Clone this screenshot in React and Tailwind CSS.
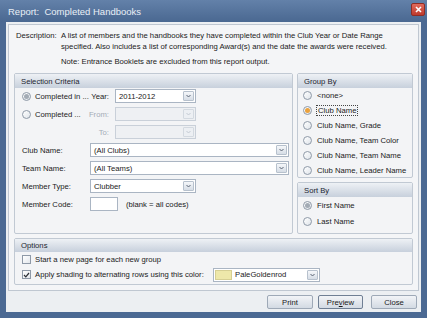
import React from 'react';

const FONT = { fontFamily: '"Liberation Sans", Arial, sans-serif' };

const Arrow = ({ disabled }) => (
  <span
    className={`flex items-center justify-center w-[11px] m-[1px] border rounded-[1px] ${
      disabled
        ? 'border-[#d3d9e0] bg-[#eceff3]'
        : 'border-[#b7c1cd] bg-gradient-to-b from-[#f5f7fa] to-[#d6dde6]'
    }`}
  >
    <svg width="5" height="4" viewBox="0 0 5 4">
      <path d="M0.5 1 L2.5 3 L4.5 1" fill="none" stroke={disabled ? '#c2c9d2' : '#5a6574'} strokeWidth="1" />
    </svg>
  </span>
);

const Select = ({ w, value, disabled, swatch }) => (
  <div
    className={`flex h-[14px] border ${
      disabled ? 'border-[#c9d0d9] bg-[#eef0f3]' : 'border-[#aab5c3] bg-white'
    }`}
    style={{ width: w }}
  >
    {swatch && <span className="w-[17px] my-[1px] ml-[1px] bg-[#eee8aa] border border-[#d6cf93]" />}
    <span className="flex-1 flex items-center pl-[3px] text-[#1a1a1a] truncate">{value}</span>
    <Arrow disabled={disabled} />
  </div>
);

const Radio = ({ checked, accent }) => (
  <span className="flex items-center justify-center w-[9px] h-[9px] shrink-0 rounded-full border border-[#8e99a7] bg-gradient-to-br from-white to-[#dfe4ea]">
    {checked && (
      <span className={`w-[5px] h-[5px] rounded-full ${accent ? 'bg-[#eba23d]' : 'bg-[#a3abb5]'}`} />
    )}
  </span>
);

const Check = ({ checked }) => (
  <span className="flex items-center justify-center w-[9px] h-[9px] shrink-0 border border-[#8e99a7] bg-gradient-to-br from-white to-[#e3e7ec]">
    {checked && (
      <svg width="7" height="6" viewBox="0 0 7 6">
        <path d="M1 3 L2.8 4.8 L6 1" fill="none" stroke="#2b2f36" strokeWidth="1.2" />
      </svg>
    )}
  </span>
);

const GroupBox = ({ title, className, headerH = 'h-[14px]', children }) => (
  <div className={`flex flex-col border border-[#c1c9d3] rounded-[2px] bg-[#f3f4f6] ${className}`}>
    <div className={`${headerH} shrink-0 flex items-center px-[6px] bg-gradient-to-b from-[#eef1f5] to-[#c7d0dc] text-[#1c2530]`}>
      {title}
    </div>
    {children}
  </div>
);

const Button = ({ label, w, focused }) => (
  <div
    className={`h-[14px] flex items-center justify-center rounded-[2px] border bg-gradient-to-b from-[#f2f4f7] to-[#d3dae3] text-[#1a1a1a] ${
      focused ? 'border-[#6f7f94]' : 'border-[#9ea9b7]'
    }`}
    style={{ width: w }}
  >
    {label}
  </div>
);

const GROUPS = ['<none>', 'Club Name', 'Club Name, Grade', 'Club Name, Team Color', 'Club Name, Team Name', 'Club Name, Leader Name'];

export default function App() {
  return (
    <div className="w-[427px] h-[318px] flex flex-col bg-[#4b6993] text-[7.7px] leading-[11px]" style={FONT}>
      <div className="h-[22px] shrink-0 flex items-center justify-between pl-[8px] pr-[2px] bg-gradient-to-b from-[#6381a9] to-[#4a6891]">
        <span className="text-[9.5px] text-[#e9eff6] whitespace-pre">Report:  Completed Handbooks</span>
        <span className="w-[14px] h-[13px] mb-[3px] flex items-center justify-center rounded-[2px] border border-[#8f2d24] bg-gradient-to-b from-[#e26a5c] to-[#bd3a2d]">
          <svg width="7" height="7" viewBox="0 0 7 7">
            <path d="M1 1 L6 6 M6 1 L1 6" stroke="white" strokeWidth="1.6" />
          </svg>
        </span>
      </div>

      <div className="flex-1 mx-[6px] mb-[6px] bg-[#eceff2] px-[2px] pt-[2px] flex flex-col">
        <div className="h-[267px] shrink-0 flex flex-col border border-[#bfc7d1] bg-[#f4f5f7] pt-[5px]">
          <div className="flex pl-[7px] text-[#1a1a1a]">
            <span className="w-[45px] shrink-0">Description:</span>
            <div className="flex flex-col">
              <span className="whitespace-nowrap">A list of members and the handbooks they have completed within the Club Year or Date Range</span>
              <span className="whitespace-nowrap">specified. Also includes a list of corresponding Award(s) and the date the awards were received.</span>
              <span className="mt-[4px]">Note: Entrance Booklets are excluded from this report output.</span>
            </div>
          </div>

          <div className="flex gap-[4px] px-[5px] mt-[6px]">
            <GroupBox title="Selection Criteria" className="w-[279px] h-[161px]">
              <div className="flex flex-col gap-[4px] pt-[1px] pl-[7px] text-[#1a1a1a]">
                <div className="flex items-center h-[14px]">
                  <Radio checked />
                  <span className="ml-[4px] w-[53px] whitespace-nowrap">Completed in ...</span>
                  <span className="w-[21px] text-right">Year:</span>
                  <span className="ml-[6px]"><Select w={81} value="2011-2012" /></span>
                </div>
                <div className="flex items-center h-[14px]">
                  <Radio />
                  <span className="ml-[4px] w-[53px]">Completed ...</span>
                  <span className="w-[21px] text-right text-[#a4acb6]">From:</span>
                  <span className="ml-[6px]"><Select w={81} disabled /></span>
                </div>
                <div className="flex items-center h-[14px]">
                  <span className="w-[66px]" />
                  <span className="w-[21px] text-right text-[#a4acb6]">To:</span>
                  <span className="ml-[6px]"><Select w={81} disabled /></span>
                </div>
                <div className="flex items-center h-[14px]">
                  <span className="w-[68px]">Club Name:</span>
                  <Select w={199} value="(All Clubs)" />
                </div>
                <div className="flex items-center h-[14px]">
                  <span className="w-[68px]">Team Name:</span>
                  <Select w={199} value="(All Teams)" />
                </div>
                <div className="flex items-center h-[14px]">
                  <span className="w-[68px]">Member Type:</span>
                  <Select w={106} value="Clubber" />
                </div>
                <div className="flex items-center h-[14px]">
                  <span className="w-[68px]">Member Code:</span>
                  <span className="w-[28px] h-[14px] border border-[#aab5c3] bg-white" />
                  <span className="ml-[8px]">(blank = all codes)</span>
                </div>
              </div>
            </GroupBox>

            <div className="w-[116px] flex flex-col gap-[4px]">
              <GroupBox title="Group By" className="h-[105px]">
                <div className="flex flex-col pl-[5px] text-[#1a1a1a]">
                  {GROUPS.map((g, i) => (
                    <div key={g} className="flex items-center h-[15px]">
                      <Radio checked={i === 1} accent />
                      <span
                        className={
                          i === 1
                            ? 'ml-[4px] border border-dotted border-[#444] px-[1px] leading-[9px]'
                            : 'ml-[5px] whitespace-nowrap'
                        }
                      >
                        {g}
                      </span>
                    </div>
                  ))}
                </div>
              </GroupBox>
              <GroupBox title="Sort By" className="h-[52px]">
                <div className="flex flex-col pl-[5px] text-[#1a1a1a]">
                  <div className="flex items-center h-[16px]">
                    <Radio checked />
                    <span className="ml-[5px]">First Name</span>
                  </div>
                  <div className="flex items-center h-[16px]">
                    <Radio />
                    <span className="ml-[5px]">Last Name</span>
                  </div>
                </div>
              </GroupBox>
            </div>
          </div>

          <GroupBox title="Options" headerH="h-[13px]" className="mx-[5px] mt-[4px] h-[47px]">
            <div className="flex flex-col pl-[7px] text-[#1a1a1a]">
              <div className="flex items-center h-[14px]">
                <Check />
                <span className="ml-[4px]">Start a new page for each new group</span>
              </div>
              <div className="flex items-center h-[17px]">
                <Check checked />
                <span className="ml-[4px] w-[178px]">Apply shading to alternating rows using this color:</span>
                <Select w={107} value="PaleGoldenrod" swatch />
              </div>
            </div>
          </GroupBox>
        </div>

        <div className="flex justify-end mt-[4px] pr-[2px]">
          <Button label="Print" w={46} />
          <span className="ml-[5px]">
            <Button label={<span>Pre<u>v</u>iew</span>} w={45} focused />
          </span>
          <span className="ml-[8px]">
            <Button label="Close" w={46} />
          </span>
        </div>
      </div>
    </div>
  );
}
